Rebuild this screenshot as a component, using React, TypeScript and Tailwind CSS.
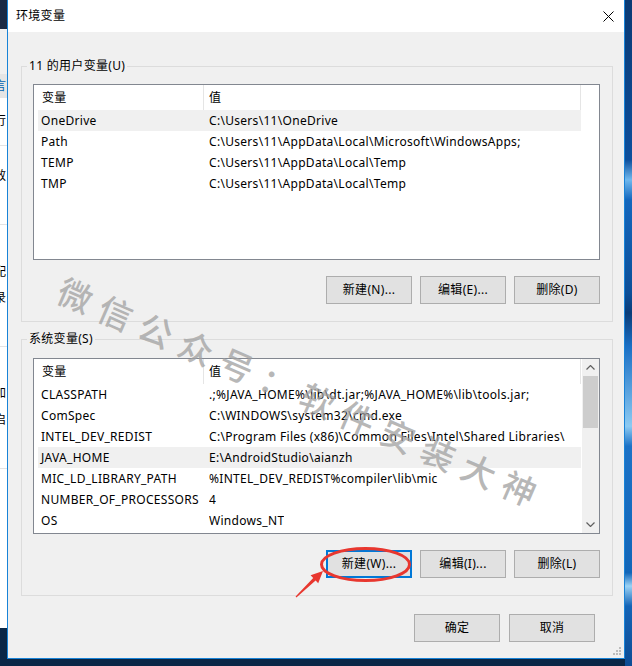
import React from 'react'

type Row = [string, string]

const userVars: Row[] = [
  ['OneDrive', 'C:\\Users\\11\\OneDrive'],
  ['Path', 'C:\\Users\\11\\AppData\\Local\\Microsoft\\WindowsApps;'],
  ['TEMP', 'C:\\Users\\11\\AppData\\Local\\Temp'],
  ['TMP', 'C:\\Users\\11\\AppData\\Local\\Temp'],
]

const sysVars: Row[] = [
  ['CLASSPATH', '.;%JAVA_HOME%\\lib\\dt.jar;%JAVA_HOME%\\lib\\tools.jar;'],
  ['ComSpec', 'C:\\WINDOWS\\system32\\cmd.exe'],
  ['INTEL_DEV_REDIST', 'C:\\Program Files (x86)\\Common Files\\Intel\\Shared Libraries\\'],
  ['JAVA_HOME', 'E:\\AndroidStudio\\aianzh'],
  ['MIC_LD_LIBRARY_PATH', '%INTEL_DEV_REDIST%compiler\\lib\\mic'],
  ['NUMBER_OF_PROCESSORS', '4'],
  ['OS', 'Windows_NT'],
]

// right half of a glyph from the window behind the dialog
const Frag = ({ ch, className = '' }: { ch: string; className?: string }) => (
  <div className={`h-[16px] overflow-hidden whitespace-nowrap leading-[16px] ${className}`}>
    <span className="-ml-[6px] inline-block">{ch}</span>
  </div>
)

const LeftStrip = () => (
  <div className="flex h-full w-[7px] shrink-0 flex-col">
    <div className="h-[29px] bg-[#1b2a44]" />
    <div className="flex h-[599px] flex-col bg-white">
      <div className="h-[45px] bg-[#f0f0f0]" />
      <div className="flex h-[24px] items-center bg-[#e5e5e5]">
        <Frag ch="言" className="text-[#0063b1]" />
      </div>
      <Frag ch="行" className="mt-[15px]" />
      <div className="mt-[16px] h-px bg-[#e3e3e3]" />
      <Frag ch="效" className="mt-[22px]" />
      <div className="mt-[40px] h-px bg-[#e3e3e3]" />
      <Frag ch="配" className="mt-[39px]" />
      <Frag ch="录" className="mt-[10px]" />
      <div className="mt-[40px] h-px bg-[#e3e3e3]" />
      <Frag ch="加" className="mt-[38px]" />
      <Frag ch="启" className="mt-[11px]" />
      <div className="mt-[40px] h-px bg-[#e3e3e3]" />
    </div>
    <div className="flex-1 bg-[#0a2747]" />
  </div>
)

const Chevron = ({ up }: { up?: boolean }) => (
  <svg width="9" height="5" viewBox="0 0 9 5">
    <polyline
      points={up ? '0.5,4.5 4.5,0.5 8.5,4.5' : '0.5,0.5 4.5,4.5 8.5,0.5'}
      fill="none"
      stroke="#606060"
      strokeWidth="1.2"
    />
  </svg>
)

const ScrollBar = () => (
  <div className="flex h-full w-[17px] shrink-0 flex-col bg-[#f0f0f0]">
    <div className="flex h-[17px] items-center justify-center">
      <Chevron up />
    </div>
    <div className="mx-[1px] h-[52px] bg-[#cdcdcd]" />
    <div className="flex-1" />
    <div className="flex h-[17px] items-center justify-center">
      <Chevron />
    </div>
  </div>
)

const ListView = ({ rows, selected, scroll }: { rows: Row[]; selected: number; scroll?: boolean }) => (
  <div className="flex h-[176px] border border-[#828790] bg-white">
    <div className="min-w-0 flex-1 overflow-hidden">
      <div className="flex h-[25px]">
        <div className="flex w-[170px] shrink-0 items-center border-r border-[#e5e5e5] pl-[8px]">变量</div>
        <div className="flex w-[377px] shrink-0 items-center border-r border-[#e5e5e5] pl-[5px]">值</div>
      </div>
      <div className="pl-[4px]">
        {rows.map(([name, value], i) => (
          <div
            key={name}
            className={`flex h-[21px] w-[543px] items-center leading-[16px] ${i === selected ? 'bg-[#f0f0f0]' : ''}`}
          >
            <div className="w-[171px] shrink-0 overflow-hidden whitespace-nowrap pl-[3px]">{name}</div>
            <div className="overflow-hidden whitespace-nowrap">{value}</div>
          </div>
        ))}
      </div>
    </div>
    {scroll && <ScrollBar />}
  </div>
)

const Btn = ({ children, focused }: { children: React.ReactNode; focused?: boolean }) => (
  <button
    type="button"
    className={`flex h-[28px] w-[86px] items-center justify-center bg-[#e1e1e1] leading-[16px] ${
      focused ? 'border-2 border-[#0078d7]' : 'border border-[#adadad]'
    }`}
  >
    {children}
  </button>
)

const Group = ({ title, pt, children }: { title: string; pt: string; children: React.ReactNode }) => (
  <fieldset className="ml-[13px] mr-[11px] border border-[#dcdcdc] px-0 pb-[17px]">
    <legend className="ml-[5px] px-[2px] leading-[16px]">{title}</legend>
    <div className={`pl-[11px] pr-[12px] ${pt}`}>{children}</div>
  </fieldset>
)

const Grip = () => (
  <svg width="9" height="9" viewBox="0 0 9 9">
    {[
      [6, 0],
      [3, 3],
      [6, 3],
      [0, 6],
      [3, 6],
      [6, 6],
    ].map(([x, y]) => (
      <rect key={`${x}-${y}`} x={x} y={y} width="2" height="2" fill="#bcbcbc" />
    ))}
  </svg>
)

export default function App() {
  return (
    <div className="relative flex h-[666px] w-[632px] overflow-hidden bg-[#0a2747] font-['Noto_Sans','Noto_Sans_CJK_SC',sans-serif] text-[12px] tracking-[0.3px] text-black">
      <LeftStrip />

      <div className="flex h-[659px] w-[618px] shrink-0 flex-col border-x border-b border-[#1883d7] bg-[#f0f0f0]">
        {/* title bar */}
        <div className="flex h-[32px] shrink-0 items-center justify-between bg-white pl-[8px] pr-[10px]">
          <span className="leading-[16px]">环境变量</span>
          <svg width="11" height="11" viewBox="0 0 11 11">
            <path d="M0.5 0.5 L10.5 10.5 M10.5 0.5 L0.5 10.5" stroke="#000" strokeWidth="1" />
          </svg>
        </div>

        <div className="flex flex-1 flex-col pt-[26px]">
          <Group title="11 的用户变量(U)" pt="pt-[10px]">
            <ListView rows={userVars} selected={0} />
            <div className="mt-[16px] flex justify-end gap-[8px]">
              <Btn>新建(N)...</Btn>
              <Btn>编辑(E)...</Btn>
              <Btn>删除(D)</Btn>
            </div>
          </Group>

          <div className="mt-[9px]">
            <Group title="系统变量(S)" pt="pt-[11px]">
              <ListView rows={sysVars} selected={3} scroll />
              <div className="mt-[16px] flex justify-end gap-[8px]">
                <Btn focused>新建(W)...</Btn>
                <Btn>编辑(I)...</Btn>
                <Btn>删除(L)</Btn>
              </div>
            </Group>
          </div>

          <div className="mt-[18px] flex justify-end gap-[9px] pr-[29px]">
            <Btn>确定</Btn>
            <Btn>取消</Btn>
          </div>

          <div className="mt-auto flex justify-end pb-[2px] pr-[2px]">
            <Grip />
          </div>
        </div>
      </div>

      <div className="h-full flex-1 bg-[linear-gradient(180deg,#0a3a74_0%,#0d4f9c_24%,#6fb8ee_27%,#1467bd_30%,#0c4f98_44%,#0a3c78_47%,#1a6fc4_52%,#8ccaf2_64%,#1c72c6_67%,#1266b8_86%,#9ad2f5_88%,#1464b6_91%,#0d4c94_100%)]" />

      {/* watermark */}
      <div className="pointer-events-none absolute left-[60px] top-[268px] origin-left rotate-[23.5deg] whitespace-nowrap font-['Noto_Sans_CJK_SC',sans-serif] text-[34px] font-medium leading-[40px] tracking-[10px] text-[#a0a0a0]/75">
        微信公众号：软件安装大神
      </div>

      {/* red annotation */}
      <svg className="pointer-events-none absolute left-0 top-0" width="632" height="666" viewBox="0 0 632 666">
        <ellipse cx="365.5" cy="564.5" rx="44" ry="16" fill="none" stroke="#e8372f" strokeWidth="3" />
        <polygon
          points="296.4,597.4 315.6,580.6 318.2,583.3 323,571 310.6,575.3 313.2,578 295.6,596.6"
          fill="#e8372f"
        />
      </svg>
    </div>
  )
}
